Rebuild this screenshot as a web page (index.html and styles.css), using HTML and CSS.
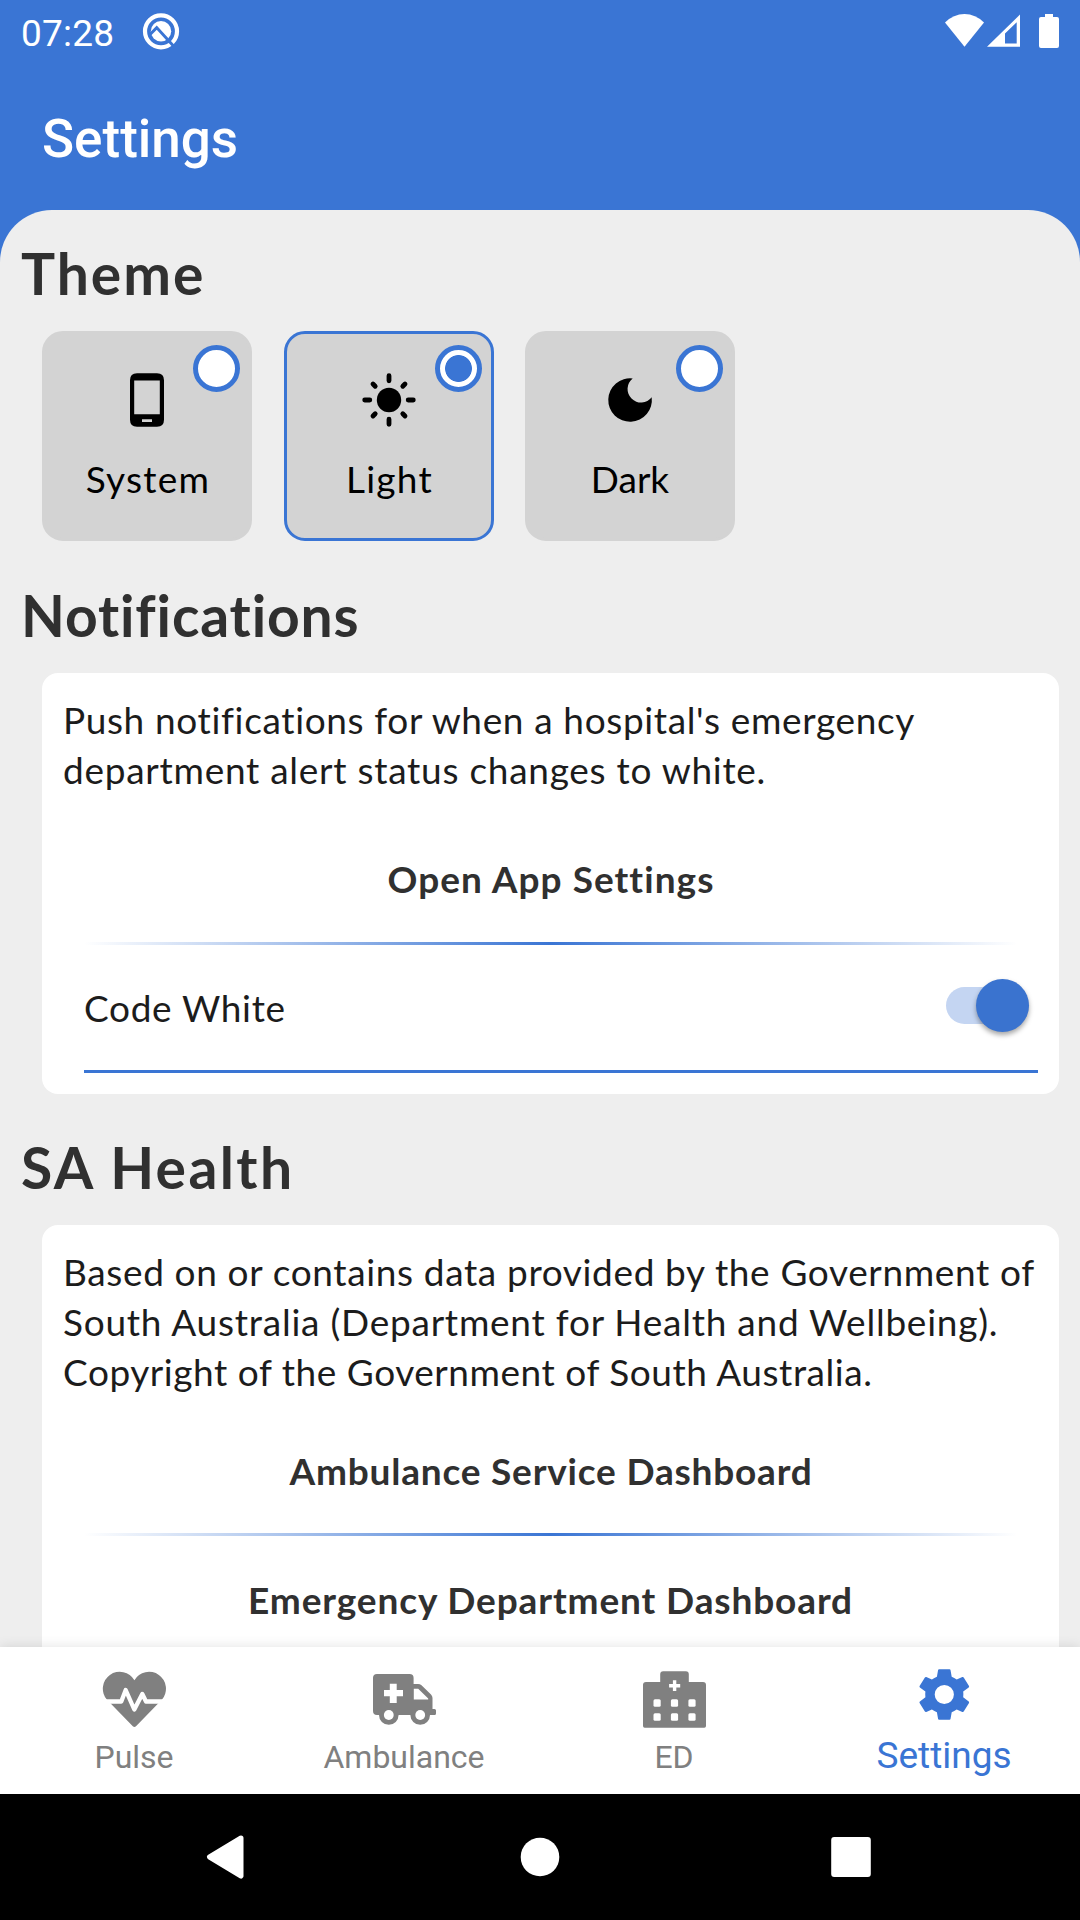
FILE: index.html
```html
<!DOCTYPE html>
<html lang="en">
<head>
<meta charset="utf-8">
<title>Settings</title>
<link rel="stylesheet" href="styles.css">
</head>
<body>
<div class="screen">
  <header class="status-bar">
    <div class="status-left">
      <span class="time">07:28</span>
      <svg class="icon" width="38" height="38" viewBox="0 0 38 38">
        <circle cx="19" cy="19.3" r="16" fill="none" stroke="#fff" stroke-width="4.2"/>
        <circle cx="19" cy="19.3" r="10.2" fill="#fff"/>
        <path d="M7 23.5L14.7 15.6L31.5 34" fill="none" stroke="#3a75d4" stroke-width="3"/>
      </svg>
    </div>
    <div class="status-right">
      <svg class="icon" width="39" height="34" viewBox="0 0 39 34"><path d="M0 9.5Q8.500 1 19.500 1T39 9.500L19.500 33.700Z" fill="#fff"/></svg>
      <svg class="icon signal" width="33" height="34" viewBox="0 0 33 34"><path fill-rule="evenodd" d="M0 33.700L33 1.500V33.700ZM18 20.500V30.500H29.700V9.200Z" fill="#fff"/></svg>
      <svg class="icon battery" width="20" height="35" viewBox="0 0 20 35"><path d="M6 1H14V4H18Q20 4 20 6V33Q20 35 18 35H2Q0 35 0 33V6Q0 4 2 4H6Z" fill="#fff"/></svg>
    </div>
  </header>
  <div class="app-bar"><h1 class="app-title">Settings</h1></div>

  <main class="sheet">
    <h2 class="heading theme">Theme</h2>
    <div class="options">
      <div class="option">
        <svg class="icon" width="56" height="56" viewBox="0 0 56 56"><path fill-rule="evenodd" d="M18 1.300H38Q45 1.300 45 8.300V47.700Q45 54.700 38 54.700H18Q11 54.700 11 47.700V8.300Q11 1.300 18 1.300ZM15.200 8.500V42.300H40.800V8.500ZM23 47.300V50H33V47.300Z"/></svg>
        <span class="option-label wide">System</span>
        <span class="radio"></span>
      </div>
      <div class="option selected">
        <svg class="icon" width="56" height="56" viewBox="0 0 56 56">
          <circle cx="28" cy="28" r="12.200"/>
          <path d="M28 3.700V8.800M28 47.200V52.300M3.700 28H8.800M47.200 28H52.300M12 12L14.200 14.200M41.800 41.800L44 44M12 44L14.200 41.800M41.800 14.200L44 12" fill="none" stroke="#000" stroke-width="4.800" stroke-linecap="round"/>
        </svg>
        <span class="option-label wide">Light</span>
        <span class="radio"></span>
      </div>
      <div class="option">
        <svg class="icon" width="56" height="56" viewBox="0 0 56 56"><path d="M30.700 6.400A21.800 21.800 0 1 0 49.700 25.300A13.500 13.500 0 1 1 30.700 6.400Z"/></svg>
        <span class="option-label">Dark</span>
        <span class="radio"></span>
      </div>
    </div>

    <h2 class="heading notifications">Notifications</h2>
    <section class="card">
      <p class="copy">
        <span class="line push">Push notifications for when a hospital's emergency</span>
        <span class="line department">department alert status changes to white.</span>
      </p>
      <div class="link open">Open App Settings</div>
      <div class="divider"></div>
      <div class="toggle-row">
        <span>Code White</span>
        <span class="switch"><span class="thumb"></span></span>
      </div>
    </section>

    <h2 class="heading health">SA Health</h2>
    <section class="card">
      <p class="copy">
        <span class="line based">Based on or contains data provided by the Government of</span>
        <span class="line south">South Australia (Department for Health and Wellbeing).</span>
        <span class="line copyright">Copyright of the Government of South Australia.</span>
      </p>
      <div class="link ambulance">Ambulance Service Dashboard</div>
      <div class="divider"></div>
      <div class="link emergency">Emergency Department Dashboard</div>
    </section>
  </main>

  <nav class="tabs">
    <div class="tab">
      <svg class="icon" width="72" height="60" viewBox="0 0 72 60">
        <path d="M35.400 12.300A16.900 16.900 0 1 0 8 31.800L33.800 58.300Q35.400 59.800 37 58.300L62.800 31.800A16.900 16.900 0 1 0 35.400 12.300Z" fill="#808080"/>
        <path d="M4 33.500H22.300L26.700 22L35.300 41.500L43.300 26L47 33.500H67" fill="none" stroke="#fff" stroke-width="4.300" stroke-linejoin="round"/>
      </svg>
      <span class="tab-label">Pulse</span>
    </div>
    <div class="tab">
      <svg class="icon" width="72" height="60" viewBox="0 0 72 60">
        <path d="M8 6H40.600Q44.600 6 44.600 10V16H49Q51 16 52.500 17.300L62 26.500Q63.500 28 63.500 30V41H65.500Q67 41 67 42.500V45.500Q67 47 65.500 47H8Q4 47 4 43V10Q4 6 8 6Z" fill="#808080"/>
        <circle cx="19.800" cy="47" r="9.800" fill="#808080"/><circle cx="51.200" cy="47" r="9.800" fill="#808080"/>
        <circle cx="19.800" cy="47" r="4.900" fill="#fff"/><circle cx="51.200" cy="47" r="4.900" fill="#fff"/>
        <path d="M44.800 20.800H49.200L59.200 30.600V31.400H44.800ZM20.800 15.700H27.700V22H34V28.200H27.700V35H20.800V28.200H15V22H20.800Z" fill="#fff"/>
      </svg>
      <span class="tab-label">Ambulance</span>
    </div>
    <div class="tab">
      <svg class="icon" width="72" height="60" viewBox="0 0 72 60">
        <path d="M24.200 3.300H46.800Q49.800 3.300 49.800 6.300V14H64Q67 14 67 17V58Q67 59.700 65.300 59.700H5.700Q4 59.700 4 58V17Q4 14 7 14H21.200V6.300Q21.200 3.300 24.200 3.300Z" fill="#808080"/>
        <path d="M33.900 12.300H37.300V16H41.200V19.400H37.300V23H33.900V19.400H30.100V16H33.900Z" fill="#fff"/>
        <g fill="#fff"><rect x="14.500" y="31.300" width="7.200" height="7.400" rx="1.500"/><rect x="31.900" y="31.300" width="7.200" height="7.400" rx="1.500"/><rect x="49.400" y="31.300" width="7.200" height="7.400" rx="1.500"/><rect x="14.500" y="45.300" width="7.200" height="7.400" rx="1.500"/><rect x="31.900" y="45.300" width="7.200" height="7.400" rx="1.500"/><rect x="49.400" y="45.300" width="7.200" height="7.400" rx="1.500"/></g>
      </svg>
      <span class="tab-label">ED</span>
    </div>
    <div class="tab active">
      <svg class="icon" width="72" height="60" viewBox="0 0 72 60">
        <path fill-rule="evenodd" d="M30.100 1.200H40.500Q41.400 1.200 41.500 2L42.700 8.800Q45.200 9.700 47.700 11.500L53.300 9Q54.300 8.700 54.700 9.400L60 18Q60.400 18.900 59.700 19.400L54.200 23.600Q54.600 26.500 54.200 29.300L59.700 33.500Q60.400 34 60 34.900L54.700 43.600Q54.300 44.300 53.300 44L47.700 41.600Q45.200 43.400 42.700 44.300L41.500 51Q41.400 51.800 40.500 51.800H30.100Q29.200 51.800 29.100 51L27.900 44.300Q25.400 43.400 22.900 41.600L17.300 44Q16.300 44.300 15.900 43.600L10.600 34.900Q10.200 34 10.900 33.500L16.400 29.300Q16 26.500 16.400 23.600L10.900 19.400Q10.200 18.900 10.600 18L15.900 9.400Q16.300 8.700 17.300 9L22.900 11.500Q25.400 9.700 27.900 8.800L29.100 2Q29.200 1.200 30.100 1.200ZM35.300 16.900A9.600 9.600 0 1 0 35.300 36.100A9.600 9.600 0 1 0 35.300 16.900Z" fill="#3a75d4"/>
      </svg>
      <span class="tab-label">Settings</span>
    </div>
  </nav>

  <footer class="nav-bar">
    <svg width="48" height="48" viewBox="0 0 48 48"><path d="M36 5L4.500 24L36 43Z" fill="#fff" stroke="#fff" stroke-width="5" stroke-linejoin="round"/></svg>
    <svg width="48" height="48" viewBox="0 0 48 48"><circle cx="24" cy="24" r="19.300" fill="#fff"/></svg>
    <svg width="48" height="48" viewBox="0 0 48 48"><rect x="4.200" y="4" width="39.600" height="40" rx="3" fill="#fff"/></svg>
  </footer>
</div>
</body>
</html>
```
FILE: styles.css
```css
* { box-sizing: border-box; }
body { margin: 0; background: #3a75d4; }
.icon { display: block; flex: none; }

.screen {
  width: 1080px;
  height: 1920px;
  display: flex;
  flex-direction: column;
  overflow: hidden;
  background: #3a75d4;
  font-family: Lato, "Noto Sans", sans-serif;
}

.status-bar {
  height: 63px;
  flex: none;
  display: flex;
  justify-content: space-between;
  padding: 12px 21px 0;
  color: #fff;
  font: 400 37px/44px Roboto, sans-serif;
}
.status-left { display: flex; gap: 28px; }
.time { width: 93px; letter-spacing: 0.2px; }
.status-right { display: flex; align-items: flex-start; padding-top: 1px; }
.signal { margin-left: 3px; }
.battery { margin-left: 19px; }

.app-bar { height: 147px; flex: none; padding: 45px 42px 0; }
.app-title {
  margin: 0;
  color: #fff;
  font: 500 53px/62px Roboto, sans-serif;
}

.sheet {
  flex: 1;
  min-height: 0;
  overflow: hidden;
  padding: 28px 21px 0;
  background: #eee;
  border-radius: 52px 52px 0 0;
}

.heading {
  margin: 0 0 23px;
  color: #303030;
  font-size: 57px;
  font-weight: 700;
  line-height: 70px;
}
.theme { letter-spacing: 2px; }
.notifications { letter-spacing: 0.85px; }
.health { letter-spacing: 2.4px; }

.options { display: flex; gap: 31.5px; margin: 0 0 39px 21px; }
.option {
  position: relative;
  display: flex;
  flex-direction: column;
  align-items: center;
  gap: 26px;
  width: 210px;
  height: 210px;
  padding-top: 38px;
  background: #d3d3d3;
  border: 3px solid #d3d3d3;
  border-radius: 21px;
}
.selected { border-color: #3a75d4; }
.option-label { font-size: 37px; line-height: 50px; color: #000; }
.wide { letter-spacing: 1.25px; padding-left: 2px; }
.radio {
  position: absolute;
  top: 11px;
  right: 9px;
  width: 47px;
  height: 47px;
  border: 5px solid #3a75d4;
  border-radius: 50%;
  background: #fff;
}
.selected .radio { background: radial-gradient(circle, #3a75d4 13px, #fff 13.8px); }

.card {
  margin: 0 0 38px 21px;
  width: 1017px;
  padding: 22px 21px 21px;
  background: #fff;
  border-radius: 16px;
  color: #1c1c1c;
  font-size: 37px;
  line-height: 50px;
}
.card:last-child { padding-bottom: 60px; }
.copy { margin: 0 0 59px; }
.health + .card .copy { margin-bottom: 49px; }
.line { display: block; white-space: nowrap; }
.push { letter-spacing: 0.64px; }
.department { letter-spacing: 0.73px; }
.based { letter-spacing: 0.64px; }
.south { letter-spacing: 0.76px; }
.copyright { letter-spacing: 0.54px; }

.link { text-align: center; font-weight: 700; color: #303030; }
.open { letter-spacing: 1.05px; padding-left: 1px; }
.ambulance { letter-spacing: 0.8px; padding-left: 1px; }
.emergency { letter-spacing: 0.88px; }

.divider {
  height: 3px;
  margin: 38px 21px;
  background: linear-gradient(90deg, rgba(58, 117, 212, 0), #3a75d4, rgba(58, 117, 212, 0));
}
.health + .card .divider { margin: 37px 21px 39px; }

.toggle-row {
  display: flex;
  justify-content: space-between;
  margin-left: 21px;
  padding: 0 9px 37px 0;
  border-bottom: 3px solid #3a75d4;
  letter-spacing: 0.68px;
}
.switch {
  display: flex;
  justify-content: flex-end;
  align-items: center;
  width: 83px;
  height: 37px;
  margin-top: 4px;
  border-radius: 19px;
  background: #c4d5f2;
}
.thumb {
  width: 53px;
  height: 53px;
  flex: none;
  border-radius: 50%;
  background: #3a73cf;
  box-shadow: 0 3px 5px rgba(0, 0, 0, 0.35);
}

.tabs {
  position: relative;
  flex: none;
  height: 147px;
  display: grid;
  grid-template-columns: repeat(4, 1fr);
  padding-top: 21px;
  background: #fff;
  box-shadow: 0 0 12px rgba(0, 0, 0, 0.12);
}
.tab {
  display: flex;
  flex-direction: column;
  align-items: center;
  gap: 10px;
  color: #808080;
  font: 400 32px/38px Roboto, sans-serif;
}
.tab-label { padding-right: 2px; }
.active { gap: 6px; color: #3a75d4; font-size: 37px; line-height: 44px; }

.nav-bar {
  position: relative;
  flex: none;
  height: 126px;
  display: flex;
  justify-content: center;
  align-items: center;
  gap: 263px;
  background: #000;
}
```
